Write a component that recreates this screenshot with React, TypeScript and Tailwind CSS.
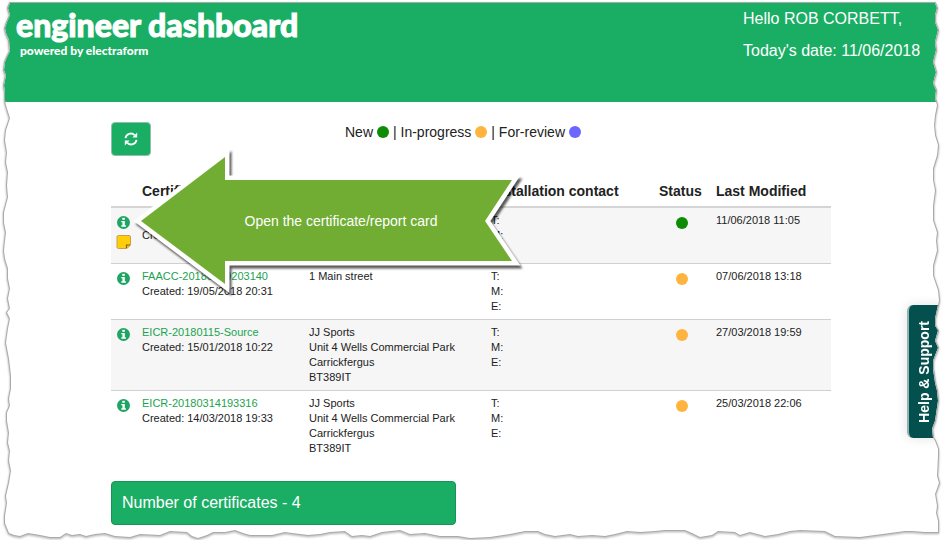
import React from 'react';

interface Certificate {
  ref: string;
  created: string;
  address: string[];
  status: 'new' | 'progress' | 'review';
  modified: string;
  note?: boolean;
}

const dotColors = {
  new: 'bg-[#0f8c05]',
  progress: 'bg-[#ffb440]',
  review: 'bg-[#6c66ff]',
};

const certificates: Certificate[] = [
  {
    ref: 'EICR-2018',
    created: '11/06/2018',
    address: [],
    status: 'new',
    modified: '11/06/2018 11:05',
    note: true,
  },
  {
    ref: 'FAACC-20180519203140',
    created: '19/05/2018 20:31',
    address: ['1 Main street'],
    status: 'progress',
    modified: '07/06/2018 13:18',
  },
  {
    ref: 'EICR-20180115-Source',
    created: '15/01/2018 10:22',
    address: ['JJ Sports', 'Unit 4 Wells Commercial Park', 'Carrickfergus', 'BT389IT'],
    status: 'progress',
    modified: '27/03/2018 19:59',
  },
  {
    ref: 'EICR-20180314193316',
    created: '14/03/2018 19:33',
    address: ['JJ Sports', 'Unit 4 Wells Commercial Park', 'Carrickfergus', 'BT389IT'],
    status: 'progress',
    modified: '25/03/2018 22:06',
  },
];

// Outline of the torn paper sheet, clockwise from the top left corner
const EDGE =
  'M10 3 L935 3 937 8 935 15 935 22 938 30 937 34 935 42 936 50 933 62 936 72 933 83 936 90 935 98 937 105 935 115 934 125 935 135 938 145 937 155 933 168 933 180 935 190 933 205 933 220 937 232 936 240 937 250 933 265 933 275 938 290 939 300 935 318 935 325 938 330 935 340 938 347 933 360 933 368 935 382 937 390 938 400 935 420 932 428 933 437 935 440 938 448 938 455 937 475 939 482 935 493 937 505 936 512 938 520 938 531 ' +
  '925 531 912 530 905 530 890 532 875 534 860 536 835 535 825 530 800 529 790 530 778 533 765 535 750 531 740 534 735 531 718 530 712 534 700 536 692 532 685 529 665 529 655 530 640 531 627 530 615 533 605 535 592 534 578 535 570 533 555 535 545 533 538 530 525 530 510 533 490 536 470 537 458 535 440 535 425 532 410 533 400 529 382 531 370 535 362 534 352 535 345 530 330 531 320 533 308 534 292 532 285 531 272 534 250 534 243 532 235 529 225 531 213 531 207 534 198 537 192 535 187 531 170 530 160 534 140 533 130 536 115 535 105 532 95 533 86 535 80 533 72 534 66 532 60 536 50 536 40 534 28 532 20 535 14 534 9 532 ' +
  '5 522 5 515 7 502 6 495 9 482 11 470 9 460 10 450 8 442 9 432 7 420 7 412 10 405 9 398 11 388 11 375 9 358 6 342 8 328 10 318 7 312 10 308 8 298 10 288 8 278 8 268 5 258 4 250 5 240 6 232 4 222 4 212 8 197 7 185 8 172 6 162 7 152 5 140 6 130 10 118 6 105 5 100 5 92 4 85 6 75 4 70 5 62 7 57 10 51 9 40 6 33 5 28 7 22 10 15 8 8 Z';

const OUTSIDE = 'M-5 -5 H948 V545 H-5 Z ' + EDGE;

function Dot({ status }: { status: Certificate['status'] }) {
  return <span className={`inline-block h-3 w-3 rounded-full ${dotColors[status]}`} />;
}

function RefreshIcon() {
  return (
    <svg viewBox="0 0 14 14" className="h-3.5 w-3.5" fill="none" stroke="white" strokeWidth="1.8">
      <path d="M1.5 6.2 A5.3 5.3 0 0 1 10.6 3.2" />
      <path d="M12.5 7.8 A5.3 5.3 0 0 1 3.4 10.8" />
      <path d="M13.2 0.6 V5.4 H8.4 Z" fill="white" stroke="none" />
      <path d="M0.8 13.4 V8.6 H5.6 Z" fill="white" stroke="none" />
    </svg>
  );
}

function InfoIcon() {
  return (
    <svg viewBox="0 0 13 13" className="h-[13px] w-[13px]">
      <circle cx="6.5" cy="6.5" r="6.5" fill="#1fa463" />
      <rect x="5.3" y="1.8" width="2.5" height="2" fill="white" />
      <path d="M4.3 4.9 H7.8 V9.3 H8.9 V10.8 H4.3 V9.3 H5.4 V6.3 H4.3 Z" fill="white" />
    </svg>
  );
}

function NoteIcon() {
  return (
    <svg viewBox="0 0 16 16" className="h-4 w-4">
      <path
        d="M2.5 1.5 H13 Q14.5 1.5 14.5 3 V11 L11 14.5 H2.5 Q1 14.5 1 13 V3 Q1 1.5 2.5 1.5 Z"
        fill="#ffcd0a"
        stroke="#c9a04a"
      />
      <path d="M10.5 14 V11 H14" fill="none" stroke="#7d6414" strokeWidth="1.2" />
    </svg>
  );
}

function Callout() {
  return (
    <div className="pointer-events-none absolute -top-7 left-5 h-[148px] w-[400px]">
      <svg viewBox="0 0 400 148" className="absolute inset-0 h-full w-full overflow-visible">
        <path
          d="M10 73 L94 9 V32 H381 L354 73 L381 113 H94 V136 Z"
          fill="#70ad32"
          stroke="white"
          strokeWidth="9"
          className="[filter:drop-shadow(2px_3px_1px_rgba(0,0,0,0.65))] [paint-order:stroke]"
        />
      </svg>
      <p className="relative pl-5 pt-[63px] text-center text-sm text-white">Open the certificate/report card</p>
    </div>
  );
}

export default function App() {
  return (
    <div className="relative min-h-screen overflow-hidden bg-white pb-4 font-['Liberation_Sans',Arial,sans-serif] text-[#222]">
      <header className="flex min-h-[102px] justify-between bg-[#1aae64] pl-4 pt-[3px] text-white">
        <div className="pt-1 font-['Lato',sans-serif] font-black">
          <h1 className="text-[32px] leading-9 [-webkit-text-stroke:1px_white]">engineer dashboard</h1>
          <p className="pl-1 text-xs leading-4">powered by electraform</p>
        </div>
        <div className="w-[200px] text-base leading-8">
          <p>Hello ROB CORBETT,</p>
          <p>Today's date: 11/06/2018</p>
        </div>
      </header>

      <main className="pl-4 pr-[17px] pt-5">
        <div className="mx-auto max-w-[720px]">
          <div className="flex items-start">
            <button
              type="button"
              aria-label="Refresh"
              className="flex h-[34px] w-10 items-center justify-center rounded border border-[#8fbfa6] bg-[#1aae64]"
            >
              <RefreshIcon />
            </button>
            <p className="flex flex-1 items-center justify-center gap-1 pr-14 text-sm">
              New <Dot status="new" /> | In-progress <Dot status="progress" /> | For-review <Dot status="review" />
            </p>
          </div>

          <div className="relative mt-5">
            <table className="w-full table-fixed border-separate border-spacing-0 text-left text-[11px] leading-[15px]">
              <colgroup>
                <col className="w-[25px]" />
                <col className="w-[167px]" />
                <col className="w-[182px]" />
                <col className="w-[168px]" />
                <col className="w-[57px]" />
                <col />
              </colgroup>
              <thead>
                <tr className="whitespace-nowrap text-sm [&>th]:border-b-2 [&>th]:border-[#d5d5d5] [&>th]:px-1.5 [&>th]:py-[5px]">
                  <th />
                  <th>Certificate</th>
                  <th>Installation address</th>
                  <th>Installation contact</th>
                  <th>Status</th>
                  <th>Last Modified</th>
                </tr>
              </thead>
              <tbody>
                {certificates.map((c) => (
                  <tr
                    key={c.ref}
                    className="align-top odd:bg-[#f6f6f6] [&>td]:px-1.5 [&>td]:py-[5px] [&:not(:first-child)>td]:border-t [&:not(:first-child)>td]:border-[#d0d0d0]"
                  >
                    <td>
                      <button type="button" aria-label="Open card" className="mt-[3px] block">
                        <InfoIcon />
                      </button>
                      {c.note && (
                        <button type="button" aria-label="Note" className="-ml-px mt-[5px] block">
                          <NoteIcon />
                        </button>
                      )}
                    </td>
                    <td>
                      <a href="#" className="text-[#1aa34f]">{c.ref}</a>
                      <br />
                      Created: {c.created}
                    </td>
                    <td>
                      {c.address.map((line) => (
                        <div key={line}>{line}</div>
                      ))}
                    </td>
                    <td>
                      <div>T:</div>
                      <div>M:</div>
                      <div>E:</div>
                    </td>
                    <td>
                      <div className="mt-1 flex justify-center">
                        <Dot status={c.status} />
                      </div>
                    </td>
                    <td>{c.modified}</td>
                  </tr>
                ))}
              </tbody>
            </table>
            <Callout />
          </div>

          <div className="mt-5 max-w-[345px] rounded-sm border border-[#189355] bg-[#1aae64] px-2.5 py-[9px] text-base text-white">
            Number of certificates - 4
          </div>
        </div>
      </main>

      <button
        type="button"
        className="absolute right-0 top-[305px] flex h-[133px] w-9 items-center justify-center rounded-l-md border-l-2 border-[#8fb5b3] bg-[#04504e] pr-1 text-sm font-bold text-white shadow-[0_0_12px_rgba(0,0,0,0.12)]"
      >
        <span className="rotate-180 [writing-mode:vertical-rl]">Help &amp; Support</span>
      </button>

      {/* torn paper frame, the shadow falls outwards only */}
      <svg
        viewBox="0 0 943 540"
        preserveAspectRatio="none"
        className="pointer-events-none absolute inset-0 h-full w-full"
      >
        <clipPath id="outside">
          <path d={OUTSIDE} clipRule="evenodd" />
        </clipPath>
        <path d={OUTSIDE} fill="white" fillRule="evenodd" />
        <g clipPath="url(#outside)">
          <path
            d={EDGE}
            fill="none"
            stroke="#aaa"
            strokeWidth="2"
            className="[filter:drop-shadow(0_1px_1px_rgba(0,0,0,0.35))]"
          />
        </g>
      </svg>
    </div>
  );
}
